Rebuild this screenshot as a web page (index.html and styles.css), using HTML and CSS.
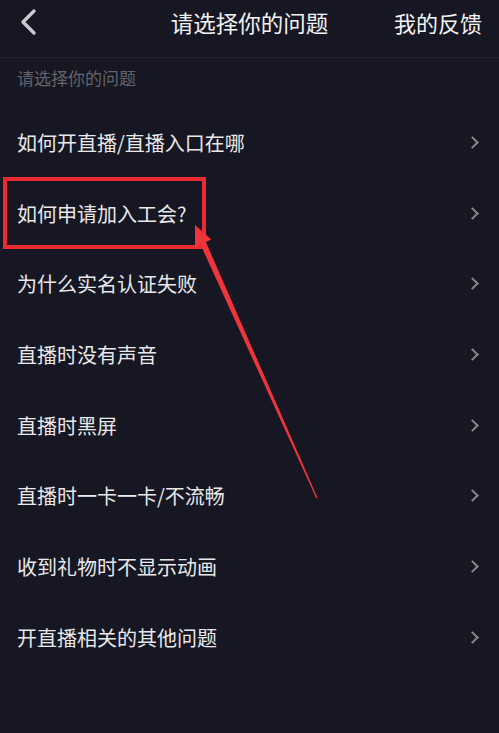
FILE: index.html
```html
<html>
<head>
  <meta charset="utf-8">
  <title>请选择你的问题</title>
  <link rel="stylesheet" href="styles.css">
</head>
<body>
  <div class="page">
    <header class="topbar">
      <div class="back">
        <svg width="18" height="28" viewBox="0 0 18 28">
          <path d="M15 3 L4 14 L15 25" fill="none" stroke="#c9c9ce" stroke-width="3.4" stroke-linecap="round" stroke-linejoin="round"/>
        </svg>
      </div>
      <div class="title">请选择你的问题</div>
      <div class="feedback">我的反馈</div>
    </header>

    <div class="subhead">请选择你的问题</div>

    <ul class="questions">
      <li><span>如何开直播/直播入口在哪</span><i class="chev"></i></li>
      <li><span>如何申请加入工会?</span><i class="chev"></i></li>
      <li><span>为什么实名认证失败</span><i class="chev"></i></li>
      <li><span>直播时没有声音</span><i class="chev"></i></li>
      <li><span>直播时黑屏</span><i class="chev"></i></li>
      <li><span>直播时一卡一卡/不流畅</span><i class="chev"></i></li>
      <li><span>收到礼物时不显示动画</span><i class="chev"></i></li>
      <li><span>开直播相关的其他问题</span><i class="chev"></i></li>
    </ul>

    <!-- annotation drawn over the screenshot -->
    <div class="mark-box"></div>
    <svg class="mark-arrow" width="499" height="733" viewBox="0 0 499 733">
      <polygon points="195,225 211.4,239.6 205.9,242.1 317.6,498 316.4,498.6 200.5,244.5 195,247" fill="#f0343b"/>
    </svg>
  </div>
</body>
</html>
```

FILE: styles.css
```css
html, body {
  margin: 0;
  padding: 0;
  background-color: #161722;
}

body {
  font-family: "Noto Sans CJK SC", "Noto Sans", sans-serif;
  color: #e9e9ec;
}

.page {
  position: relative;
  width: 499px;
  height: 733px;
  overflow: hidden;
}

.topbar {
  display: grid;
  grid-template-columns: 1fr auto 1fr;
  align-items: center;
  height: 44px;
  padding-bottom: 13px;
  border-bottom: 1px solid #23242e;
}

.back {
  padding-left: 19px;
  display: flex;
  align-items: center;
  padding-top: 0;
}

.title {
  font-size: 22.5px;
  color: #f2f2f4;
  letter-spacing: 0;
}

.feedback {
  justify-self: end;
  padding-right: 17px;
  font-size: 22px;
  color: #f2f2f4;
}

.subhead {
  height: 41px;
  padding: 8px 0 0 17px;
  font-size: 17px;
  line-height: 24px;
  color: #62636b;
}

.questions {
  list-style: none;
  margin: 0;
  padding: 0;
}

.questions li {
  display: flex;
  align-items: center;
  justify-content: space-between;
  height: 70.7px;
  padding: 0 22px 0 17px;
  font-size: 20px;
}

.chev {
  width: 7px;
  height: 7px;
  border-top: 2px solid #85868d;
  border-right: 2px solid #85868d;
  transform: rotate(45deg);
}

.mark-box {
  position: absolute;
  left: 3px;
  top: 177px;
  width: 195px;
  height: 64px;
  border: 4px solid #ec2a31;
}

.mark-arrow {
  position: absolute;
  left: 0;
  top: 0;
}
```
